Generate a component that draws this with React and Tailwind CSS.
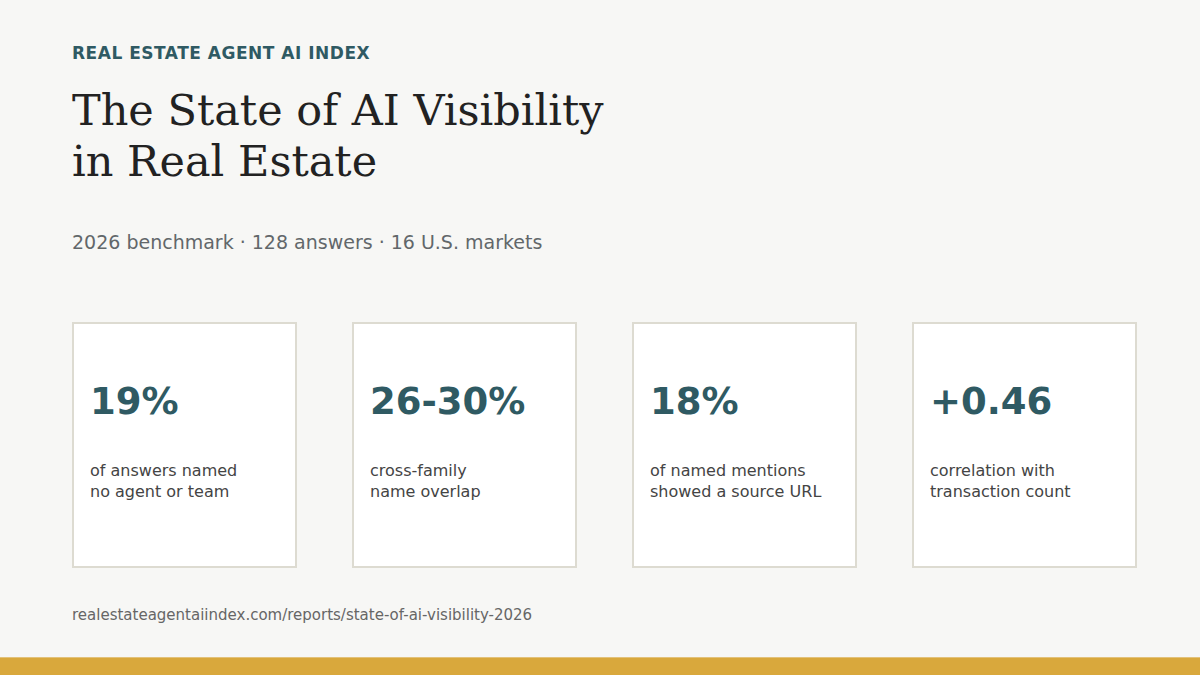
import React from "react";

const stats = [
  { value: "19%", label: ["of answers named", "no agent or team"] },
  { value: "26-30%", label: ["cross-family", "name overlap"] },
  { value: "18%", label: ["of named mentions", "showed a source URL"] },
  { value: "+0.46", label: ["correlation with", "transaction count"] },
];

const sans = { fontFamily: '"DejaVu Sans", Verdana, sans-serif' };

const App = () => {
  return (
    <div className="w-[1200px] h-[675px] bg-[#f7f7f5] flex flex-col overflow-hidden" style={sans}>
      <div className="flex-1 px-[72px] pt-[43px] flex flex-col">
        {/* Kicker */}
        <p className="text-[17px] leading-[20px] font-bold tracking-[0.03em] text-[#2f5a63] uppercase">
          Real Estate Agent AI Index
        </p>

        {/* Title */}
        <h1
          className="mt-[22px] text-[43px] leading-[51px] text-[#222222]"
          style={{ fontFamily: '"DejaVu Serif", Georgia, serif' }}
        >
          The State of AI Visibility
          <br />
          in Real Estate
        </h1>

        <p className="mt-[43px] text-[19px] leading-[24px] text-[#62676a]">
          2026 benchmark · 128 answers · 16 U.S. markets
        </p>

        {/* Stat cards */}
        <div className="mt-[68px] grid grid-cols-4 gap-[55px] w-[1065px]">
          {stats.map((s) => (
            <div
              key={s.value}
              className="h-[246px] bg-white border-2 border-[#dddbd1] px-[16px] pt-[56px]"
            >
              <div className="text-[37px] leading-[44px] font-bold text-[#2f5a63]">{s.value}</div>
              <div className="mt-[36px] text-[16px] leading-[21px] text-[#444444]">
                {s.label[0]}
                <br />
                {s.label[1]}
              </div>
            </div>
          ))}
        </div>

        <p className="mt-[38px] text-[15px] leading-[18px] text-[#666666]">
          realestateagentaiindex.com/reports/state-of-ai-visibility-2026
        </p>
      </div>

      {/* Gold bar */}
      <div className="h-[18px] bg-[#d9a83c] border-t border-[#e3c27a]" />
    </div>
  );
};

export default App;
